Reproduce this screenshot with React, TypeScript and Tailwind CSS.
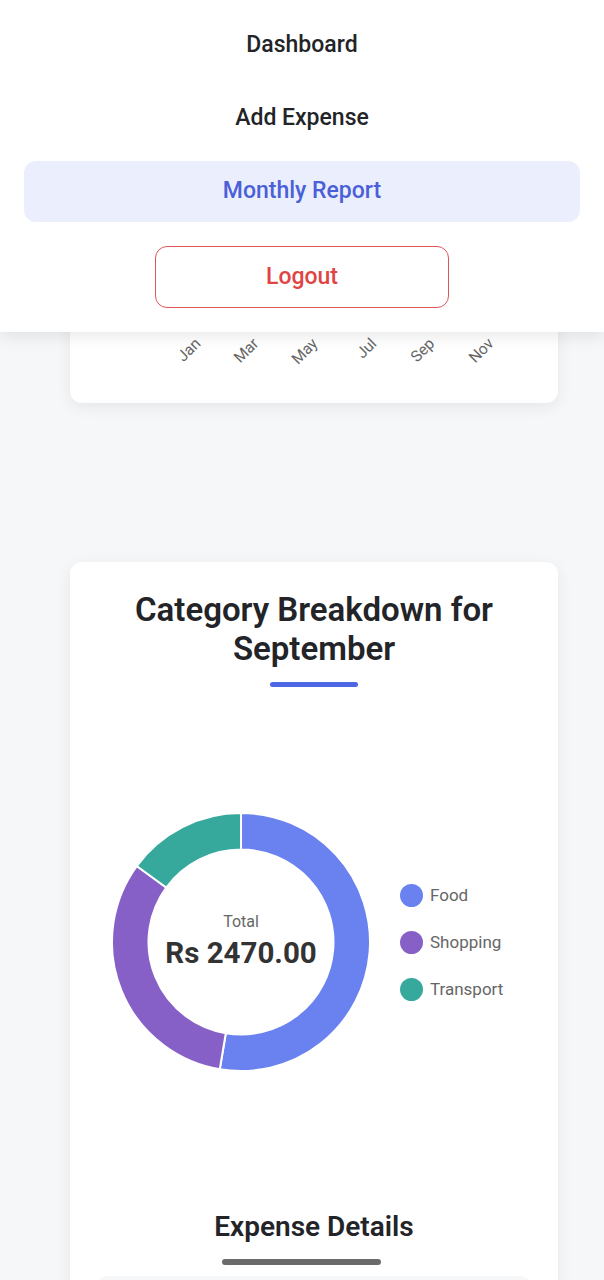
import React from 'react';

const navItems = [
  { label: 'Dashboard', active: false },
  { label: 'Add Expense', active: false },
  { label: 'Monthly Report', active: true },
];

const categories = [
  { name: 'Food', amount: 1300, color: '#6a82ef' },
  { name: 'Shopping', amount: 800, color: '#8660c6' },
  { name: 'Transport', amount: 370, color: '#36a99c' },
];

const months = ['Jan', 'Mar', 'May', 'Jul', 'Sep', 'Nov'];

function arcPath(cx: number, cy: number, R: number, r: number, a0: number, a1: number) {
  const p = (rad: number, a: number) => {
    const t = (a * Math.PI) / 180;
    return `${(cx + rad * Math.sin(t)).toFixed(2)} ${(cy - rad * Math.cos(t)).toFixed(2)}`;
  };
  const large = a1 - a0 > 180 ? 1 : 0;
  return `M ${p(R, a0)} A ${R} ${R} 0 ${large} 1 ${p(R, a1)} L ${p(r, a1)} A ${r} ${r} 0 ${large} 0 ${p(r, a0)} Z`;
}

function Donut() {
  const total = categories.reduce((s, c) => s + c.amount, 0);
  let start = 0;
  return (
    <svg width="262" height="262" viewBox="0 0 262 262">
      {categories.map((c) => {
        const sweep = (c.amount / total) * 360;
        const d = arcPath(131, 131, 129, 92.5, start, start + sweep);
        start += sweep;
        return <path key={c.name} d={d} fill={c.color} stroke="#ffffff" strokeWidth="2" />;
      })}
      <text x="131" y="110" textAnchor="middle" dominantBaseline="central" fontSize="16" fill="#666666">
        Total
      </text>
      <text x="131" y="142" textAnchor="middle" dominantBaseline="central" fontSize="29.5" fontWeight="700" fill="#333333">
        Rs {total.toFixed(2)}
      </text>
    </svg>
  );
}

function MonthAxis() {
  const ends = [128, 186, 245, 304, 362, 421];
  return (
    <svg width="488" height="60" viewBox="0 0 488 60" className="block overflow-visible">
      {months.map((m, i) => (
        <text
          key={m}
          x={ends[i]}
          y={24}
          textAnchor="end"
          dominantBaseline="central"
          fontSize="15.5"
          fill="#666666"
          transform={`rotate(-45 ${ends[i]} 24)`}
        >
          {m}
        </text>
      ))}
    </svg>
  );
}

export default function App() {
  return (
    <div className="relative h-[1280px] overflow-hidden bg-[#f6f7f9] font-['Roboto',sans-serif]">
      <div className="ml-[70px] w-[488px] pt-[100px]">
        <div className="flex h-[303px] flex-col justify-end rounded-xl bg-white pb-[26px] shadow-[0_4px_16px_rgba(0,0,0,0.07)]">
          <MonthAxis />
        </div>

        <div className="mt-[159px] h-[800px] rounded-xl bg-white pt-[28px] shadow-[0_4px_16px_rgba(0,0,0,0.07)]">
          <h2 className="px-4 text-center text-[33px] font-semibold leading-[39px] text-[#222428]">
            Category Breakdown for September
          </h2>
          <div className="mx-auto mt-[14px] h-[5px] w-[88px] rounded-full bg-[#4d66e4]" />

          <div className="mt-[124px] flex items-center pl-[40px]">
            <Donut />
            <div className="ml-[28px] flex flex-col gap-[24px]">
              {categories.map((c) => (
                <div key={c.name} className="flex items-center gap-[7px]">
                  <span className="h-[23px] w-[23px] rounded-full" style={{ backgroundColor: c.color }} />
                  <span className="text-[17px] leading-[23px] text-[#666666]">{c.name}</span>
                </div>
              ))}
            </div>
          </div>

          <h3 className="mt-[136px] text-center text-[28px] font-semibold leading-[36px] text-[#222428]">
            Expense Details
          </h3>
          <div className="mx-[26px] mt-[31px] h-[60px] rounded-xl bg-[#f6f7f9]" />
        </div>
      </div>

      <nav className="absolute left-0 right-0 top-0 flex flex-col items-center bg-white px-6 pb-6 pt-[15px] shadow-[0_6px_14px_rgba(0,0,0,0.08)]">
        {navItems.map((item) => (
          <div
            key={item.label}
            className={`mb-3 flex h-[61px] w-full items-center justify-center rounded-xl text-[23px] font-medium ${
              item.active ? 'bg-[#ebeffd] text-[#4a5fd8]' : 'text-[#222428]'
            }`}
          >
            {item.label}
          </div>
        ))}
        <button className="mt-3 flex h-[62px] w-[294px] items-center justify-center rounded-xl border border-[#e05555] text-[23px] font-medium text-[#e04444]">
          Logout
        </button>
      </nav>

      <div className="absolute left-[222px] top-[1259px] h-[6px] w-[159px] rounded-full bg-[#6b6b6b]" />
    </div>
  );
}
